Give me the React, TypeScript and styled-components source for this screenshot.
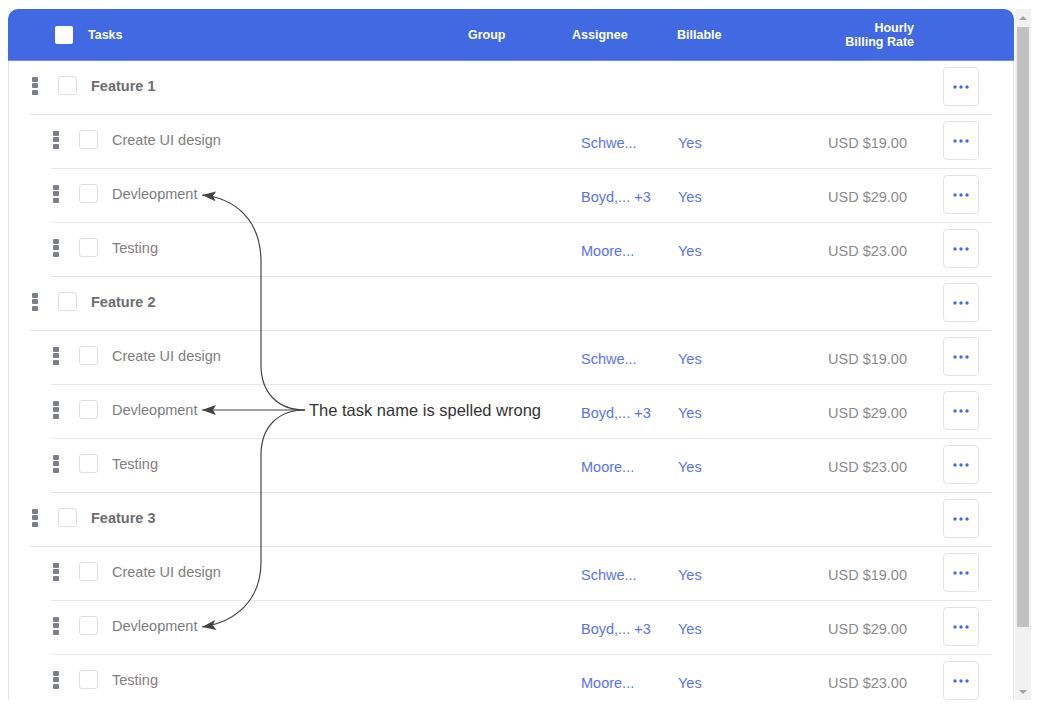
import React from "react"
import styled, { createGlobalStyle } from "styled-components"

const GlobalStyle = createGlobalStyle`
    html, body {
        margin: 0;
        background: #ffffff;
    }
    body {
        font-family: "Liberation Sans", Arial, sans-serif;
    }
`

const COLUMNS = "1fr 104px 105px 83px 183px 49px"

const Page = styled.div`
    display: flex;
    height: 691px;
    padding: 9px 7px 0 8px;
`

const Viewport = styled.div`
    flex: 1;
    min-width: 0;
    overflow: hidden;
`

const ScrollTrack = styled.div`
    display: flex;
    flex-direction: column;
    align-items: center;
    width: 16px;
    background: #f1f1f1;
`

const ScrollArrow = styled.span<{ $down?: boolean }>`
    display: flex;
    align-items: center;
    justify-content: center;
    width: 100%;
    height: 17px;
    margin-top: ${(p) => (p.$down ? "auto" : "0")};

    &::after {
        content: "";
        border-left: 4px solid transparent;
        border-right: 4px solid transparent;
        ${(p) => (p.$down ? "border-top" : "border-bottom")}: 4px solid #a3a3a3;
    }
`

const ScrollThumb = styled.span`
    width: 12px;
    height: 600px;
    margin-top: 1px;
    background: #c1c1c1;
`

const Card = styled.div`
    position: relative;
    margin-right: 1px;
`

const Header = styled.div`
    display: grid;
    grid-template-columns: ${COLUMNS};
    align-items: center;
    height: 51px;
    padding: 0 22px;
    background: #4169e1;
    border-bottom: 1px solid #6f8ff0;
    border-radius: 10px 10px 0 0;
    color: #ffffff;
    font-size: 12.5px;
    font-weight: bold;
`

const HeadCell = styled.div<{ $right?: boolean }>`
    padding-right: ${(p) => (p.$right ? 29 : 0)}px;
    text-align: ${(p) => (p.$right ? "right" : "left")};
    line-height: 14px;
`

const HeadName = styled.div`
    display: flex;
    align-items: center;
    gap: 15px;
    padding-left: 25px;
`

const HeadCheck = styled.span`
    width: 18px;
    height: 18px;
    border-radius: 2px;
    background: #ffffff;
`

const Body = styled.div`
    border-left: 1px solid #e3e3e3;
    border-right: 1px solid #e3e3e3;
    padding-bottom: 54px;
`

const Row = styled.div<{ $level: number }>`
    display: grid;
    grid-template-columns: ${COLUMNS};
    align-items: center;
    height: 53px;
    margin: 0 21px 0 ${(p) => 21 + p.$level * 21}px;
    border-bottom: 1px solid #e6e6e6;
    font-size: 14.5px;
`

const NameCell = styled.div<{ $bold?: boolean }>`
    display: flex;
    align-items: center;
    padding: 0 0 4px 2px;
    color: ${(p) => (p.$bold ? "#6e6e6e" : "#7d7d7d")};
    font-weight: ${(p) => (p.$bold ? "bold" : "normal")};
`

const Handle = styled.span`
    display: flex;
    flex-direction: column;
    gap: 1.5px;

    & > i {
        display: block;
        width: 6px;
        height: 5px;
        border-radius: 1px;
        background: #7c7e8a;
    }
`

const Check = styled.span`
    box-sizing: border-box;
    width: 19px;
    height: 19px;
    margin: 0 14px 0 20px;
    border: 1px solid #dedede;
    border-radius: 3px;
    background: #ffffff;
`

const DataCell = styled.div<{ $pad?: number; $right?: boolean; $muted?: boolean }>`
    padding-top: 2px;
    padding-left: ${(p) => p.$pad ?? 0}px;
    padding-right: ${(p) => (p.$right ? 36 : 0)}px;
    text-align: ${(p) => (p.$right ? "right" : "left")};
    color: ${(p) => (p.$muted ? "#8a8a8a" : "#5a73e6")};
    white-space: nowrap;
`

const MoreButton = styled.button`
    display: flex;
    align-items: center;
    justify-content: center;
    box-sizing: border-box;
    width: 36px;
    height: 39px;
    padding: 0;
    border: 1px solid #e3e3e3;
    border-radius: 4px;
    background: #ffffff;
    margin-bottom: 2px;
`

const Overlay = styled.svg`
    position: absolute;
    left: 0;
    top: 0;
    width: 1008px;
    height: 700px;
    pointer-events: none;
`

const Callout = styled.div`
    position: absolute;
    left: 301px;
    top: 391px;
    line-height: 20px;
    font-size: 16.5px;
    color: #333333;
    white-space: nowrap;
`

type Task = { name: string; assignee: string; rate: string }

const tasks: Task[] = [
    { name: "Create UI design", assignee: "Schwe...", rate: "USD $19.00" },
    { name: "Devleopment", assignee: "Boyd,... +3", rate: "USD $29.00" },
    { name: "Testing", assignee: "Moore...", rate: "USD $23.00" },
]

const groups = ["Feature 1", "Feature 2", "Feature 3"]

const Dots = () => (
    <svg width="18" height="6" viewBox="0 0 18 6">
        <circle cx="3" cy="3" r="1.7" fill="#4169e1" />
        <circle cx="9" cy="3" r="1.7" fill="#4169e1" />
        <circle cx="15" cy="3" r="1.7" fill="#4169e1" />
    </svg>
)

const Grip = () => (
    <Handle>
        <i />
        <i />
        <i />
    </Handle>
)

const App = () => {
    return (
        <>
            <GlobalStyle />
            <Page>
                <Viewport>
                    <Card>
                        <Header>
                            <HeadName>
                                <HeadCheck />
                                Tasks
                            </HeadName>
                            <HeadCell>Group</HeadCell>
                            <HeadCell>Assignee</HeadCell>
                            <HeadCell>Billable</HeadCell>
                            <HeadCell $right>
                                Hourly
                                <br />
                                Billing Rate
                            </HeadCell>
                            <div />
                        </Header>

                        <Body>
                            {groups.map((group) => (
                                <React.Fragment key={group}>
                                    <Row $level={0}>
                                        <NameCell $bold>
                                            <Grip />
                                            <Check />
                                            {group}
                                        </NameCell>
                                        <div />
                                        <div />
                                        <div />
                                        <div />
                                        <MoreButton>
                                            <Dots />
                                        </MoreButton>
                                    </Row>
                                    {tasks.map((task) => (
                                        <Row $level={1} key={task.name}>
                                            <NameCell>
                                                <Grip />
                                                <Check />
                                                {task.name}
                                            </NameCell>
                                            <div />
                                            <DataCell $pad={9}>{task.assignee}</DataCell>
                                            <DataCell $pad={1}>Yes</DataCell>
                                            <DataCell $right $muted>
                                                {task.rate}
                                            </DataCell>
                                            <MoreButton>
                                                <Dots />
                                            </MoreButton>
                                        </Row>
                                    ))}
                                </React.Fragment>
                            ))}
                        </Body>

                        <Overlay viewBox="0 0 1008 700">
                            <defs>
                                <marker
                                    id="tip"
                                    markerUnits="userSpaceOnUse"
                                    viewBox="0 0 14 10"
                                    refX="14"
                                    refY="5"
                                    markerWidth="14"
                                    markerHeight="10"
                                    orient="auto-start-reverse"
                                >
                                    <path d="M0,0 L14,5 L0,10 L3,5 Z" fill="#444444" />
                                </marker>
                            </defs>
                            <g
                                transform="translate(-8 -9)"
                                fill="none"
                                stroke="#444444"
                                strokeWidth="1.2"
                            >
                                <path
                                    d="M202,195 C235,198 261,220 261,262 L261,365 C261,393 278,410 305,410"
                                    markerStart="url(#tip)"
                                />
                                <path d="M202,410 L305,410" markerStart="url(#tip)" />
                                <path
                                    d="M202,627 C236,622 261,600 261,562 L261,455 C261,427 278,410 305,410"
                                    markerStart="url(#tip)"
                                />
                            </g>
                        </Overlay>
                        <Callout>The task name is spelled wrong</Callout>
                    </Card>
                </Viewport>
                <ScrollTrack>
                    <ScrollArrow />
                    <ScrollThumb />
                    <ScrollArrow $down />
                </ScrollTrack>
            </Page>
        </>
    )
}

export default App
